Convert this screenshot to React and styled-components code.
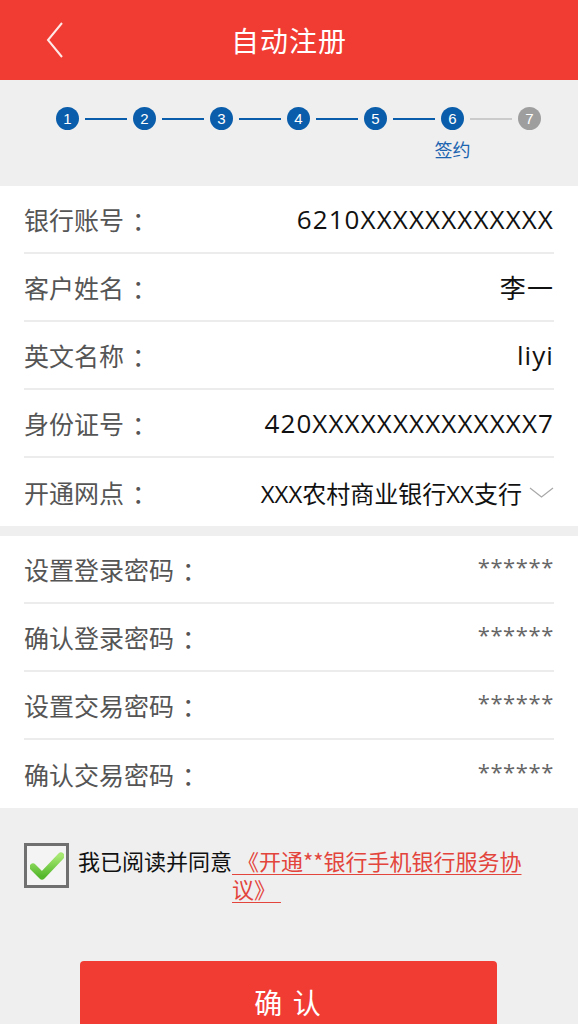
import React from 'react';
import styled, { createGlobalStyle } from 'styled-components';

const GlobalStyle = createGlobalStyle`
  html, body {
    margin: 0;
    padding: 0;
    background: #efefef;
  }
  body {
    font-family: 'Open Sans', 'Noto Sans CJK SC', sans-serif;
  }
  * {
    box-sizing: border-box;
  }
`;

const Page = styled.div`
  width: 578px;
  height: 1024px;
  overflow: hidden;
  background: #efefef;
`;

const Header = styled.header`
  height: 80px;
  background: #f13c34;
  display: grid;
  grid-template-columns: 90px 1fr 90px;
  align-items: center;
`;

const BackButton = styled.div`
  padding-left: 46px;
  display: flex;
  align-items: center;
  height: 100%;
`;

const Title = styled.h1`
  margin: 0;
  text-align: center;
  color: #ffffff;
  font-size: 28px;
  font-weight: 400;
  font-family: 'Noto Sans CJK SC', sans-serif;
  letter-spacing: 1px;
`;

const Stepper = styled.div`
  height: 106px;
  display: flex;
  align-items: flex-start;
  padding: 27px 37px 0 56px;
`;

const Step = styled.div`
  position: relative;
  width: 23px;
  height: 23px;
  flex: none;
  border-radius: 50%;
  background: ${(p) => (p.done ? '#0a5daa' : '#9e9e9e')};
  color: #ffffff;
  font-size: 15px;
  line-height: 23px;
  text-align: center;
  font-family: 'Liberation Sans', sans-serif;
`;

const StepLabel = styled.span`
  position: absolute;
  top: 31px;
  left: 50%;
  transform: translateX(-50%);
  white-space: nowrap;
  color: #1c64b0;
  font-size: 18px;
  line-height: 22px;
  font-family: 'Noto Sans CJK SC', sans-serif;
`;

const Connector = styled.div`
  flex: 1;
  height: 2px;
  margin: 10.5px 6px 0;
  background: ${(p) => (p.done ? '#0a5daa' : '#cbcbcb')};
`;

const Section = styled.section`
  background: #ffffff;
  padding: 0 24px;
  & + & {
    margin-top: 10px;
  }
`;

const Row = styled.div`
  height: 68px;
  display: flex;
  align-items: center;
  justify-content: space-between;
  border-bottom: 2px solid #ececec;
  &:last-child {
    border-bottom: none;
  }
`;

const Label = styled.span`
  color: #555555;
  font-size: 25px;
  font-family: 'Noto Sans CJK SC', sans-serif;
  white-space: nowrap;
`;

const Colon = styled.span`
  margin-left: 8px;
`;

const Value = styled.span`
  color: #111111;
  font-size: ${(p) => (p.small ? '24px' : '26px')};
  letter-spacing: ${(p) => (p.small ? '0' : '1.1px')};
  white-space: nowrap;
  display: flex;
  align-items: center;
  gap: 7px;
`;

const Masked = styled.span`
  color: #666666;
  font-size: 22px;
  letter-spacing: 0.6px;
  padding-bottom: 6px;
`;

const Agreement = styled.div`
  display: flex;
  align-items: flex-start;
  padding: 35px 40px 0 24px;
`;

const CheckBox = styled.div`
  width: 45px;
  height: 45px;
  flex: none;
  border: 3px solid #707070;
  background: #f4f4f4;
  display: flex;
  align-items: center;
  justify-content: center;
`;

const AgreeText = styled.div`
  flex: 1;
  display: flex;
  align-items: flex-start;
  margin: 3px 0 0 9px;
  font-size: 22px;
  line-height: 28px;
  color: #111111;
  font-family: 'Noto Sans CJK SC', sans-serif;
`;

const AgreePrefix = styled.span`
  flex: none;
  white-space: nowrap;
`;

const AgreeLink = styled.a`
  flex: 1;
  color: #e3443c;
  text-decoration: underline;
  text-underline-offset: 4px;
  text-decoration-thickness: 1px;
`;

const ButtonWrap = styled.div`
  padding: 59px 81px 0 80px;
`;

const ConfirmButton = styled.button`
  width: 100%;
  height: 82px;
  border: none;
  border-radius: 4px;
  background: #f13c34;
  color: #ffffff;
  font-size: 28px;
  font-family: 'Noto Sans CJK SC', sans-serif;
  letter-spacing: 2px;
`;

const ChevronLeft = () => (
  <svg width="18" height="36" viewBox="0 0 18 36">
    <polyline points="16,1 2,18 16,35" fill="none" stroke="#ffe9e6" strokeWidth="2" />
  </svg>
);

const ChevronDown = () => (
  <svg width="25" height="11" viewBox="0 0 25 11">
    <polyline points="1,1 12.5,10 24,1" fill="none" stroke="#a8a8a8" strokeWidth="1.2" />
  </svg>
);

const CheckMark = () => (
  <svg width="34" height="30" viewBox="0 0 34 30">
    <defs>
      <linearGradient id="g" x1="0" y1="0" x2="0" y2="1">
        <stop offset="0" stopColor="#a6e872" />
        <stop offset="1" stopColor="#55b82c" />
      </linearGradient>
    </defs>
    <path
      d="M3 16 L12 25 L31 5"
      fill="none"
      stroke="url(#g)"
      strokeWidth="7"
      strokeLinecap="round"
      strokeLinejoin="round"
    />
  </svg>
);

const steps = [1, 2, 3, 4, 5, 6, 7];
const current = 6;

const accountRows = [
  { label: '银行账号', value: '6210XXXXXXXXXXXX' },
  { label: '客户姓名', value: '李一' },
  { label: '英文名称', value: 'liyi' },
  { label: '身份证号', value: '420XXXXXXXXXXXXXX7' },
];

const passwordRows = ['设置登录密码', '确认登录密码', '设置交易密码', '确认交易密码'];

export default function App() {
  return (
    <Page>
      <GlobalStyle />
      <Header>
        <BackButton>
          <ChevronLeft />
        </BackButton>
        <Title>自动注册</Title>
        <div />
      </Header>

      <Stepper>
        {steps.map((n, i) => (
          <React.Fragment key={n}>
            {i > 0 && <Connector done={n <= current} />}
            <Step done={n <= current}>
              {n}
              {n === current && <StepLabel>签约</StepLabel>}
            </Step>
          </React.Fragment>
        ))}
      </Stepper>

      <Section>
        {accountRows.map((r) => (
          <Row key={r.label}>
            <Label>
              {r.label}
              <Colon>：</Colon>
            </Label>
            <Value>{r.value}</Value>
          </Row>
        ))}
        <Row>
          <Label>
            开通网点
            <Colon>：</Colon>
          </Label>
          <Value small>
            XXX农村商业银行XX支行
            <ChevronDown />
          </Value>
        </Row>
      </Section>

      <Section>
        {passwordRows.map((l) => (
          <Row key={l}>
            <Label>
              {l}
              <Colon>：</Colon>
            </Label>
            <Masked>******</Masked>
          </Row>
        ))}
      </Section>

      <Agreement>
        <CheckBox>
          <CheckMark />
        </CheckBox>
        <AgreeText>
          <AgreePrefix>我已阅读并同意</AgreePrefix>
          <AgreeLink href="#">{'\u00a0《开通**银行手机银行服务协议》\u00a0'}</AgreeLink>
        </AgreeText>
      </Agreement>

      <ButtonWrap>
        <ConfirmButton>确 认</ConfirmButton>
      </ButtonWrap>
    </Page>
  );
}
